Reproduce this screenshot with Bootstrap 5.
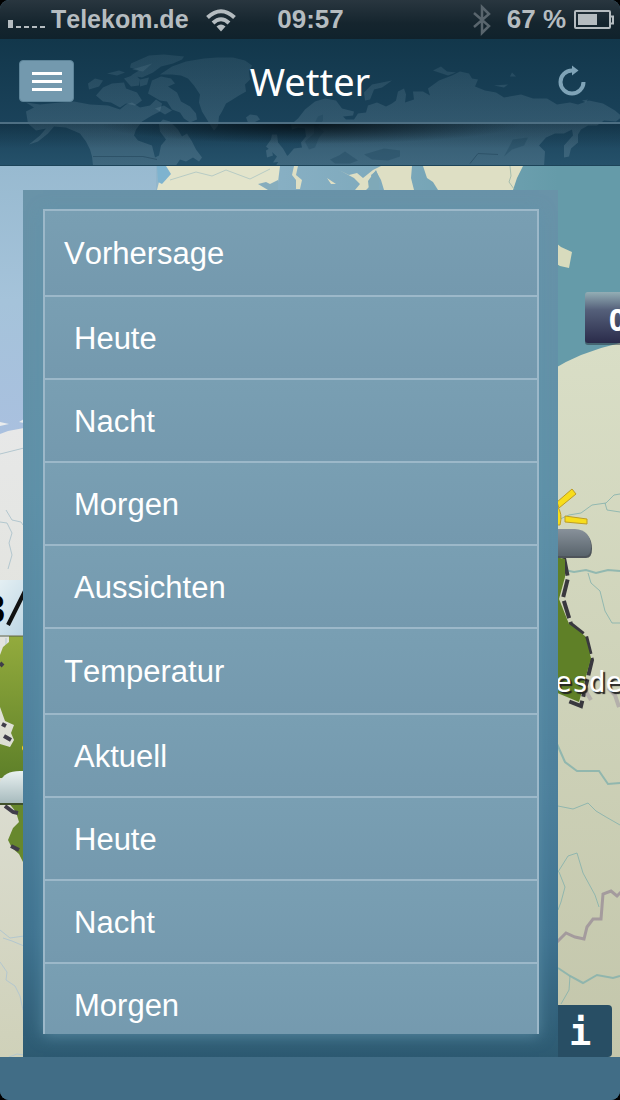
<!DOCTYPE html>
<html lang="de">
<head>
<meta charset="utf-8">
<meta name="viewport" content="width=device-width, initial-scale=1">
<title>Wetter</title>
<link href="https://cdn.jsdelivr.net/npm/bootstrap@5.3.0/dist/css/bootstrap.min.css" rel="stylesheet">
<script src="https://cdn.jsdelivr.net/npm/bootstrap@5.3.0/dist/js/bootstrap.bundle.min.js"></script>
<style>
  body { background: #000; font-family: "Liberation Sans", Arial, sans-serif; }
  .app { border-radius: 9px; background: #416d86; }
  .cover { position: absolute; inset: 0; width: 100%; height: 100%; }

  .status-bar { height: 39px; padding: 0 6px 0 7px; color: #b5bcc0; font-size: 26px; line-height: 39px;
    background: linear-gradient(#29363f, #15252e 60%, #10222c); }
  .status-bar .carrier { margin-left: 6px; font-size: 25px; font-kerning: none; }
  .status-side { flex: 1 1 0; }

  .app-header { background: linear-gradient(#12374b, #1a425a 66%, #25516a); border-bottom: 1px solid #1d4459; }
  .title-bar { height: 85px; padding: 0 19px; border-bottom: 2px solid #4e6f83; }
  .title-bar h1 { font: 400 38px/1 "Noto Sans", sans-serif; color: #fff; }
  .title-side { flex: 1 1 0; }
  .menu-btn { width: 55px; height: 42px; background: #7399ae; border-radius: 4px; border: 1px solid #5d8499; }
  .reload-btn { margin-right: 14px; }
  .header-shade { height: 41px; background: radial-gradient(ellipse 34% 20px at 50% 0, rgba(4, 14, 20, .85), rgba(4, 14, 20, 0)),
    linear-gradient(rgba(4, 20, 30, .3), rgba(4, 20, 30, 0) 60%); }

  .menu-panel { margin: 24px 62px 0 23px; padding: 19px 19px 23px 20px;
    background: linear-gradient(#6993a8, #5f91a8 35%, #4c7f9b 70%, #3f7390 86%, #2d5a71); }
  .menu-scroll { overflow-y: auto; scrollbar-width: none; min-height: 0;
    border: 2px solid #9cb8c9; border-bottom: 0; box-shadow: 0 2px 14px rgba(98, 148, 172, .75); }
  .menu-scroll::-webkit-scrollbar { display: none; }
  .menu-entry { height: 83px; padding: 4px 29px 0; flex-shrink: 0; color: #fff; font-size: 31px; font-kerning: none;
    background: linear-gradient(#799fb3, #7499ae); border-bottom: 2px solid #9cb8c9; text-decoration: none; }
  .menu-entry:hover { color: #fff; }
  .menu-group { height: 86px; padding: 2px 19px 0; }

  .info-btn { right: 8px; bottom: 0; width: 54px; height: 52px; background: #284e64; border: 0;
    border-radius: 0 4px 4px 0; text-align: left; }
  .info-btn span { display: block; margin-left: 11px; font: 700 37px/56px "DejaVu Sans Mono", monospace; color: #fff; }
  .foot-bar { height: 43px; background: #416d86; }
</style>
</head>
<body>
<div class="app d-flex flex-column vh-100 overflow-hidden">

  <div class="status-bar d-flex align-items-center fw-bold flex-shrink-0">
    <div class="status-side d-flex align-items-center">
      <svg width="38" height="10" viewBox="0 0 38 10" class="mt-2" fill="#b5bcc0" aria-hidden="true">
        <path d="M1 1h5v8H1zM9 7h5v2H9zM17 7h5v2h-5zM25 7h5v2h-5zM33 7h5v2h-5z"/>
      </svg>
      <span class="carrier">Telekom.de</span>
      <svg class="ms-3" width="32" height="24" viewBox="0 0 32 24" fill="none" stroke="#b5bcc0" stroke-width="4" aria-hidden="true">
        <path d="M2.500 9.500Q16-3 29.500 9.500M8 15q8-7.500 16 0"/>
        <path d="M11.500 18.500q4.500-4 9 0L16 23.500z" fill="#b5bcc0" stroke="none"/>
      </svg>
    </div>
    <span>09:57</span>
    <div class="status-side d-flex align-items-center justify-content-end">
      <svg width="18" height="32" viewBox="0 0 18 32" fill="none" stroke="#59656d" stroke-width="2.500" aria-hidden="true">
        <path d="M1 9l15 13-7 7V3l7 7L1 23"/>
      </svg>
      <span class="ms-3 me-2">67 %</span>
      <svg width="40" height="20" viewBox="0 0 40 20" fill="none" stroke="#b5bcc0" stroke-width="2" aria-hidden="true">
        <rect x="1" y="1" width="35" height="17" rx="1"/>
        <path d="M36.500 6.500H39v7h-2.500"/>
        <rect x="4" y="4" width="19" height="11" fill="#b5bcc0" stroke="none"/>
      </svg>
    </div>
  </div>

  <header class="app-header position-relative flex-shrink-0">
    <!-- world map watermark, fading towards the top -->
    <svg class="cover" viewBox="0 39 620 127" preserveAspectRatio="xMidYMid slice" aria-hidden="true">
      <defs>
        <linearGradient id="land" gradientUnits="userSpaceOnUse" x1="0" x2="0" y1="55" y2="166">
          <stop offset="0" stop-color="#7b9bac" stop-opacity=".14"/><stop offset="1" stop-color="#7b9bac" stop-opacity=".3"/>
        </linearGradient>
      </defs>
      <g fill="url(#land)">
        <path d="M26 112L34 108 26 103 40 105 60 103 74 102 90 105 108 106 120 110 126 105 132 103 140 108 150 106 156 100 162 104 160 112 152 116 142 122 136 130 134 136 138 141 152 146 155 158 159 156 161 146 166 140 160 132 159 124 163 120 170 122 178 130 182 137 187 134 192 142 196 150 202 158 199 162 193 158 186 162 180 160 176 166 93 166 92 157 90 150 86 142 80 134 66 128 54 127 48 134 38 142 29 145 40 136 46 129 36 131 28 124 27 118z"/>
        <path d="M88 84l7-5 8 2-4 6-10 3zM96 96l7-8 9-4 12-1 2 6 11 4 5 8-7 5-9-2-6 4-9-5-8-1zM107 74l12-3 6 2-8 3zM124 79l11-4 5 5-1 6-8 1zM131 64l18-8 15-1 20 2-2 3-9 4-12 3-8 6-11 5-11-2 8-5-9-3zM140 80l9-2-2 7-7 2zM148 94l4-13 9-4 10 2 4 5-7 3 9 6 4 9 9 5 6 7 1 6-7 3-6-4-4-6-8-3-5-8-7-1zM155 109l9-3 8 5-7 4z"/>
        <path d="M160 75l12-8 14-5 18-3 13-1 16 0 12 3 7 5-3 6 1 8-5 5 1 7-7 4-8 5-5 3-4 8-3 5-1 9-4 5-4-6-8-13-3-9 1-8-6-9-6-7-7-3-9-1zM132 70l20-6-9 8zM246 118l4-3 7 1 3 4-6 3-6 0z"/>
        <path d="M266 147l5-7 1-5 5 0 1 8 5 6 4 7-5 6-9 1 4-6zM266 151l5-3 2 8-6 2zM276 166l5-8 7-2 6-7 8-1-1-5 5-6-1-8-7-1-6 2-1-5 7-6 7-9 10-8 10-3 11 2 6 8 12 3-1 4-10 1 3 3 8 0 4-6 8-1 2-7 9-3 9 4 6-3 4-3 2-9 6-3 2 6-1 8 9-3-1-8 10 0 7 4-2-7 11-8 13-5 8-4 9 2 3 5 6 1-3 7 10 4 11 2 8 5 17-3 12 4 14 0 10 6 13-2 8 2 11-4 14 3 12 7 7 6-6 5-12-1-7 5-9 0-7 4-3 5 0 8-7 6-2 8-5 1 0-12 9-10-1-6-8 4-9 0-9 4-7 8 6 6-1 15-3 7z"/>
        <path d="M365 101l-1-8 8-8 20-4-10 7-8 2-4 10zM433 71l8-4 6 5 9 1-8 3-6-2zM494 86l14-1-4 3zM512 73l4 4-6 0zM582 101l6-1-2 3z"/>
      </g>
      <path d="M314 125l4-8 5-2 0 6-5 6 6 5-5 6-4 10-6 2-4-8 9-8zM330 160l9-4 6-4 13 9-8 3h-15zM364 155l20-6 16 2 0 6-12 4-16-1zM504 157l9-17 15-2-4 8-12 4z" fill="#173e55" fill-opacity=".3"/>
      <path d="M93 157h50l14 3M470 164l8-10 20 1" fill="none" stroke="#2d5268"/>
    </svg>
    <nav class="title-bar d-flex align-items-center position-relative" aria-label="Hauptnavigation">
      <div class="title-side">
        <button type="button" class="btn menu-btn p-0 d-flex align-items-center justify-content-center" aria-label="Menü">
          <svg width="30" height="20" viewBox="0 0 30 20" fill="#fff" aria-hidden="true"><path d="M0 1h30v3H0zM0 9h30v3H0zM0 17h30v3H0z"/></svg>
        </button>
      </div>
      <h1 class="m-0">Wetter</h1>
      <div class="title-side d-flex justify-content-end">
        <button type="button" class="btn reload-btn p-0 border-0" aria-label="Aktualisieren">
          <svg width="30" height="32" viewBox="0 0 30 32" aria-hidden="true">
            <path d="M26.500 17A11.500 11.500 0 1 1 15 5.500h2" fill="none" stroke="#7fa3b7" stroke-width="4"/>
            <path d="M15 .5l6.500 5L15 10.500z" fill="#7fa3b7"/>
          </svg>
        </button>
      </div>
    </nav>
    <div class="header-shade position-relative"></div>
  </header>

  <main class="position-relative d-flex flex-column flex-grow-1 overflow-hidden">
    <!-- weather map behind the menu -->
    <svg class="cover" viewBox="0 166 620 891" preserveAspectRatio="xMidYMid slice" aria-hidden="true">
      <defs>
        <linearGradient id="sea" x1="0" x2="1" y1="0" y2="0"><stop offset="0" stop-color="#a0bfd6"/><stop offset=".6" stop-color="#7faabd"/><stop offset=".9" stop-color="#659ba9"/></linearGradient>
        <linearGradient id="westsea" x1="0" x2="0" y1="0" y2="1"><stop offset="0" stop-color="#98bad0"/><stop offset=".5" stop-color="#a5c3da"/><stop offset="1" stop-color="#a9c0df"/></linearGradient>
        <linearGradient id="west" x1="0" x2="0" y1="0" y2="1"><stop offset="0" stop-color="#e7e8e8"/><stop offset=".35" stop-color="#e2e3dd"/><stop offset="1" stop-color="#cfd1b9"/></linearGradient>
        <linearGradient id="east" x1="0" x2="0" y1="0" y2="1"><stop offset="0" stop-color="#d9dec6"/><stop offset="1" stop-color="#c3c6ab"/></linearGradient>
        <linearGradient id="plate" x1="0" x2="0" y1="0" y2="1"><stop offset="0" stop-color="#93aeb5"/><stop offset=".35" stop-color="#55607a"/><stop offset="1" stop-color="#2a2b4a"/></linearGradient>
        <linearGradient id="green" x1="0" x2="0" y1="0" y2="1"><stop offset="0" stop-color="#93ab3d"/><stop offset="1" stop-color="#5e8029"/></linearGradient>
        <linearGradient id="tag" x1="0" x2="1" y1="0" y2="1"><stop offset="0" stop-color="#e4eff3"/><stop offset="1" stop-color="#b3d0e0"/></linearGradient>
        <linearGradient id="cloud" x1="0" x2="0" y1="0" y2="1"><stop offset="0" stop-color="#e9f1f1"/><stop offset="1" stop-color="#a5b9bc"/></linearGradient>
        <linearGradient id="dark" x1="0" x2="0" y1="0" y2="1"><stop offset="0" stop-color="#88919a"/><stop offset="1" stop-color="#59646c"/></linearGradient>
      </defs>
      <rect y="166" width="620" height="891" fill="url(#sea)"/>
      <rect y="166" width="156" height="270" fill="url(#westsea)"/>
      <!-- northern coast -->
      <path d="M155 166h125l-3 24h-120l2-8 10-8-4-8z" fill="#e3e4cb"/>
      <path d="M157 166h9l5 8-9 10-4-2z" fill="#7eb3cf"/>
      <path d="M170 180l26-8 16 4 14-6 24 9 20-10" fill="none" stroke="#b7cbc4"/>
      <path d="M258 184l8-2 4 2 8-4v10h-10z" fill="#86adbd"/>
      <path d="M294 166h4l-2 9 6 5-2 9h-4l0-9-4-5zM339 170l10 5 8-2 6 5 10-8 8-4h31l-1 12 3 12h-30l-3-10-5-9-5 4 2 8-7 7h-11l5-6-6-6zM327 178l9 6h-5zM423 166h100l-6 12-4 12h-75l-5-8-6-4z" fill="#dedfc4"/>
      <path d="M376 170l3 8 0 12h-10l-1-9z" fill="#7fa9b8"/>
      <path d="M510 166l1 10-2 6 5 7" fill="none" stroke="#a5bdae"/>
      <!-- west land -->
      <path d="M0 434l8-3 16-3v629H0z" fill="url(#west)"/>
      <path d="M0 422l9 2-9 2zM19 422l5-3v4z" fill="#e9ecee"/>
      <path d="M0 454l24-6M6 510l6 10 9 2 2 3M0 522l7 1 5 10-3 10 3 12-4 14M0 656l6-6v-12M0 930l10 8 14-2M3 938l9 3 12 5M0 962l7 10-1 8 9 6 5 10 3 14M9 1057l8-3 7 1" fill="none" stroke="#b3c7cf"/>
      <path d="M9 636h16v142H0v-34l10 3 4-7-3-7 3-8-9-4-5-14v-52l3-8 6-5z" fill="url(#green)"/>
      <path d="M25 802v64l-6-12-7-6-4-8 5-12 6-6-3-10-8-10z" fill="#67882d"/>
      <path d="M0 663l3 3M2 724l4 2M4 736l7 4M5 806l8 6 5 1M11 846l8 4" fill="none" stroke="#403d4a" stroke-width="4"/>
      <rect y="581" width="40" height="56" fill="#51604d" opacity=".5"/>
      <rect y="580" width="40" height="55" fill="url(#tag)"/>
      <text x="-17" y="623" font-family="Liberation Sans, sans-serif" font-size="40" font-weight="700">3</text>
      <path d="M8 625l22-44" stroke="#111" stroke-width="4"/>
      <circle cx="25" cy="748" r="3" fill="#f6d324"/>
      <path d="M0 782q4-11 20-11h12v33H0z" fill="url(#cloud)"/>
      <path d="M0 804h24" stroke="#3f502b" stroke-width="2"/>
      <!-- east land -->
      <path d="M550 371q30-19 70-28v717H550z" fill="url(#east)"/>
      <path d="M550 238l11 9 11 5-3 16-9-2-10-6z" fill="#d8dbbd"/>
      <g fill="none" stroke="#82b0ac" stroke-opacity=".8">
        <path d="M558 520l11-5 12-2 11-8 14-2 8-8 6-1M605 503l2 7 13 2"/>
        <path d="M560 569l14 3 12-2 10 3 12-3 12 1M557 744l8 18 12 9 22 0 9 13 12-1M558 968l12 8 13 7 14-8 16 3 7-2" stroke-width="2"/>
        <path d="M588 573l3 10 9 8 5 20 7 12 8 0M558 806l15 3 15-6 8 8 10 6 14 8M558 872l10-16 9-3 6 20 12 22 4 12M559 872l6 15-4 15-3 8M570 976l-1 14-8 14"/>
      </g>
      <path d="M556 943l10-10 9 4 9 2 3-12 6-8 8 0 2-25 8-3 6 5 4-4" fill="none" stroke="#9b8f98" stroke-width="3" stroke-opacity=".8"/>
      <rect x="585" y="293" width="60" height="52" rx="3" fill="#252f39" opacity=".5"/>
      <rect x="585" y="292" width="60" height="51" rx="3" fill="url(#plate)"/>
      <text x="609" y="331" font-family="Noto Sans, sans-serif" font-size="30" font-weight="700" fill="#fff">0</text>
      <path d="M564 558l4 20-5 20 8 26 15 12 6 24-11 46-13-5" fill="none" stroke="#39383e" stroke-width="4" stroke-dasharray="18 4"/>
      <path d="M555 557l10 2 0 18-6 22 10 25 16 12 6 22-12 44-24-10z" fill="#5f8027"/>
      <path d="M557 502l15-13 4 5-17 14zM565 516l22 3v5l-22-2zM557 506q6 7 3 19h-3z" fill="#f7dd1c" stroke="#bd9d25"/>
      <path d="M550 531h25q17 1 17 18 0 9-6 9h-36z" fill="#4e545a"/>
      <path d="M550 529h25q16 1 16 18 0 9-6 9h-35z" fill="url(#dark)"/>
      <path d="M585 690l6 10M608 688l7 7 4 12" stroke="#a39aa2" stroke-width="4" stroke-opacity=".6" fill="none"/>
      <text x="555" y="692" font-family="DejaVu Sans Mono, monospace" font-size="28" fill="#fff" style="text-shadow: 2px 2px 1px #222">esde</text>
    </svg>

    <button type="button" class="info-btn position-absolute p-0" aria-label="Information"><span>i</span></button>

    <div class="menu-panel position-relative d-flex flex-column flex-grow-1 overflow-hidden">
      <nav class="menu-scroll d-flex flex-column flex-grow-1" aria-label="Wetterkarten">
        <a href="#vorhersage" class="menu-entry menu-group d-flex align-items-center">Vorhersage</a>
        <a href="#heute" class="menu-entry d-flex align-items-center">Heute</a>
        <a href="#nacht" class="menu-entry d-flex align-items-center">Nacht</a>
        <a href="#morgen" class="menu-entry d-flex align-items-center">Morgen</a>
        <a href="#aussichten" class="menu-entry d-flex align-items-center">Aussichten</a>
        <a href="#temperatur" class="menu-entry menu-group d-flex align-items-center">Temperatur</a>
        <a href="#t-aktuell" class="menu-entry d-flex align-items-center">Aktuell</a>
        <a href="#t-heute" class="menu-entry d-flex align-items-center">Heute</a>
        <a href="#t-nacht" class="menu-entry d-flex align-items-center">Nacht</a>
        <a href="#t-morgen" class="menu-entry d-flex align-items-center">Morgen</a>
      </nav>
    </div>
  </main>

  <footer class="foot-bar flex-shrink-0"></footer>
</div>
</body>
</html>
